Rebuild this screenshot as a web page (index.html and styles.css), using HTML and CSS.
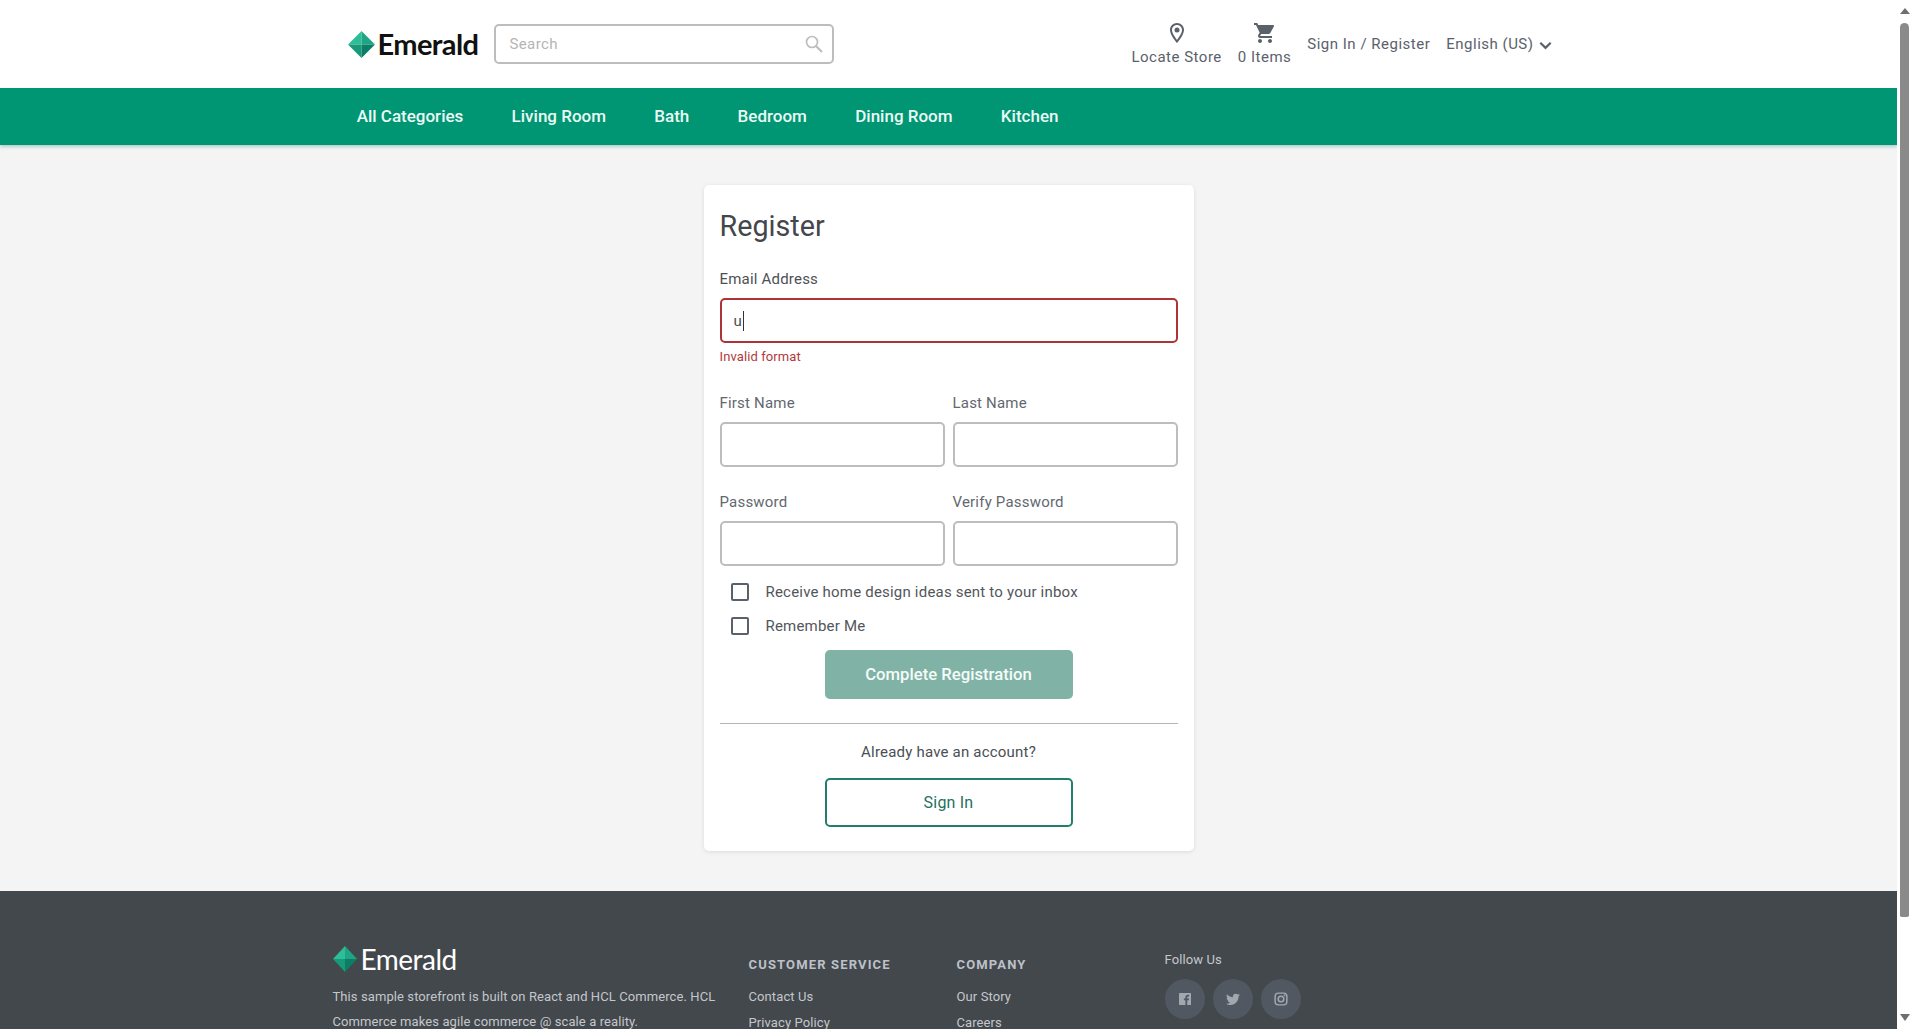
FILE: index.html
```html
<!DOCTYPE html>
<html lang="en">
<head>
<meta charset="utf-8">
<title>Register | Emerald</title>
<link rel="stylesheet" href="styles.css">
</head>
<body>
<div class="window">
  <div class="page">
    <header class="top">
      <div class="wrap top-inner">
        <a class="logo" href="#">
          <svg class="gem" viewBox="0 0 26 24" preserveAspectRatio="none"><polygon points="13,0 0,12 13,12" fill="#2dbd97"/><polygon points="13,0 26,12 13,12" fill="#1fa585"/><polygon points="0,12 13,24 13,12" fill="#17997a"/><polygon points="26,12 13,24 13,12" fill="#0b7f66"/></svg>
          <span class="logo-text">Emerald</span>
        </a>
        <div class="search">
          <input class="search-input" type="text" placeholder="Search">
          <svg class="search-icon" viewBox="0 0 18 18"><circle cx="7" cy="7" r="5.5" fill="none" stroke="#bdbdbd" stroke-width="1.7"/><path d="M11 11l6 6" stroke="#bdbdbd" stroke-width="2.2"/></svg>
        </div>
        <div class="top-actions">
          <a class="stack" href="#">
            <svg class="top-icon" viewBox="0 0 24 24"><path d="M12 2C8.13 2 5 5.13 5 9c0 5.25 7 13 7 13s7-7.75 7-13c0-3.87-3.13-7-7-7zM7 9c0-2.76 2.24-5 5-5s5 2.24 5 5c0 2.88-2.88 7.19-5 9.88C9.92 16.21 7 11.85 7 9z"/><circle cx="12" cy="9" r="2.5"/></svg>
            <span>Locate Store</span>
          </a>
          <a class="stack" href="#">
            <svg class="top-icon" viewBox="0 0 24 24"><path d="M7 18c-1.1 0-1.99.9-1.99 2S5.9 22 7 22s2-.9 2-2-.9-2-2-2zM1 2v2h2l3.6 7.59-1.35 2.45c-.16.28-.25.61-.25.96 0 1.1.9 2 2 2h12v-2H7.42c-.14 0-.25-.11-.25-.25l.03-.12.9-1.63h7.45c.75 0 1.41-.41 1.75-1.03l3.58-6.47c.08-.14.12-.31.12-.48 0-.55-.45-1-1-1H5.21l-.94-2H1zm16 16c-1.1 0-1.99.9-1.99 2s.89 2 1.99 2 2-.9 2-2-.9-2-2-2z"/></svg>
            <span>0 Items</span>
          </a>
          <a class="top-link" href="#">Sign In / Register</a>
          <a class="top-link lang" href="#">English (US)
            <svg class="chev" viewBox="0 0 12 8"><path d="M1.2 1.4L6 6.2l4.8-4.8" fill="none" stroke="#5b616b" stroke-width="2"/></svg>
          </a>
        </div>
      </div>
    </header>
    <nav class="menu">
      <div class="wrap menu-inner">
        <a href="#">All Categories</a>
        <a href="#">Living Room</a>
        <a href="#">Bath</a>
        <a href="#">Bedroom</a>
        <a href="#">Dining Room</a>
        <a href="#">Kitchen</a>
      </div>
    </nav>
    <main class="main">
      <form class="card">
        <h1 class="title">Register</h1>
        <div class="field">
          <label class="label dark">Email Address</label>
          <div class="input input-error"><span>u</span><i class="caret"></i></div>
          <div class="error">Invalid format</div>
        </div>
        <div class="cols first-cols">
          <div class="field"><label class="label">First Name</label><input class="input" type="text"></div>
          <div class="field"><label class="label">Last Name</label><input class="input" type="text"></div>
        </div>
        <div class="cols pw-cols">
          <div class="field"><label class="label">Password</label><input class="input" type="password"></div>
          <div class="field"><label class="label">Verify Password</label><input class="input" type="password"></div>
        </div>
        <div class="checks">
          <div class="check"><span class="box"></span>Receive home design ideas sent to your inbox</div>
          <div class="check"><span class="box"></span>Remember Me</div>
        </div>
        <button class="btn btn-primary" type="button">Complete Registration</button>
        <hr class="rule">
        <p class="already">Already have an account?</p>
        <button class="btn btn-outline" type="button">Sign In</button>
      </form>
    </main>
    <footer class="foot">
      <div class="wrap foot-grid">
        <div class="foot-about">
          <a class="logo foot-logo" href="#">
            <svg class="gem gem-small" viewBox="0 0 26 24" preserveAspectRatio="none"><polygon points="13,0 0,12 13,12" fill="#2dbd97"/><polygon points="13,0 26,12 13,12" fill="#1fa585"/><polygon points="0,12 13,24 13,12" fill="#17997a"/><polygon points="26,12 13,24 13,12" fill="#0b7f66"/></svg>
            <span class="logo-text">Emerald</span>
          </a>
          <p class="about">This sample storefront is built on React and HCL Commerce. HCL Commerce makes agile commerce @ scale a reality.</p>
        </div>
        <div class="foot-col">
          <h2 class="foot-head">CUSTOMER SERVICE</h2>
          <a href="#">Contact Us</a>
          <a href="#">Privacy Policy</a>
        </div>
        <div class="foot-col">
          <h2 class="foot-head">COMPANY</h2>
          <a href="#">Our Story</a>
          <a href="#">Careers</a>
        </div>
        <div class="foot-social">
          <div class="follow">Follow Us</div>
          <div class="socials">
            <a class="social" href="#"><svg viewBox="0 0 24 24"><path d="M20 3H4a1 1 0 0 0-1 1v16a1 1 0 0 0 1 1h8.6v-7h-2.3v-2.7h2.3v-2c0-2.3 1.4-3.6 3.5-3.6.7 0 1.4 0 2.1.1v2.4h-1.4c-1.1 0-1.4.5-1.4 1.3v1.8h2.7l-.4 2.7h-2.3v7H20a1 1 0 0 0 1-1V4a1 1 0 0 0-1-1z"/></svg></a>
            <a class="social" href="#"><svg viewBox="0 0 24 24"><path d="M22.46 6c-.77.35-1.6.58-2.46.69.88-.53 1.56-1.37 1.88-2.38-.83.5-1.75.85-2.72 1.05C18.37 4.5 17.26 4 16 4c-2.35 0-4.27 1.92-4.27 4.29 0 .34.04.67.11.98C8.28 9.09 5.11 7.38 3 4.79c-.37.63-.58 1.37-.58 2.15 0 1.49.75 2.81 1.91 3.56-.71 0-1.37-.2-1.95-.5v.03c0 2.08 1.48 3.82 3.44 4.21a4.22 4.22 0 0 1-1.93.07 4.28 4.28 0 0 0 4 2.98 8.521 8.521 0 0 1-5.33 1.84c-.34 0-.68-.02-1.02-.06C3.44 20.29 5.7 21 8.12 21 16 21 20.33 14.46 20.33 8.79c0-.19 0-.37-.01-.56.84-.6 1.56-1.36 2.14-2.23z"/></svg></a>
            <a class="social" href="#"><svg viewBox="0 0 24 24"><rect x="3.2" y="3.2" width="17.6" height="17.6" rx="5" fill="none" stroke="#a3a8ae" stroke-width="2.2"/><circle cx="12" cy="12" r="4.2" fill="none" stroke="#a3a8ae" stroke-width="2.2"/><circle cx="17.3" cy="6.7" r="1.3"/></svg></a>
          </div>
        </div>
      </div>
    </footer>
  </div>
  <div class="scrollbar" aria-hidden="true">
    <span class="arrow arrow-up"></span>
    <span class="thumb"></span>
    <span class="arrow arrow-down"></span>
  </div>
</div>
</body>
</html>
```
FILE: styles.css
```css
* { box-sizing: border-box; }
html, body { margin: 0; height: 100%; overflow: hidden; }
body { font-family: Roboto, "Liberation Sans", sans-serif; color: #43484d; background: #f4f4f4; }
a { color: inherit; text-decoration: none; }

.window { display: flex; height: 1029px; }
.page { flex: 1; min-width: 0; height: 1029px; overflow: hidden; display: flex; flex-direction: column; }
.wrap { width: 1232px; margin: 0 auto; }

/* scrollbar */
.scrollbar { width: 15px; flex: none; background: #fff; display: flex; flex-direction: column; align-items: center; padding: 8px 0; }
.thumb { width: 9px; height: 895px; margin: 9px 0 97px; background: #8a8a8a; border-radius: 5px 5px 2px 2px; }
.arrow { width: 0; height: 0; border-left: 5px solid transparent; border-right: 5px solid transparent; }
.arrow-up { border-bottom: 6px solid #6f6f6f; }
.arrow-down { border-top: 7px solid #6f6f6f; }

/* header */
.top { background: #fff; height: 88px; flex: none; }
.top-inner { display: flex; align-items: center; height: 88px; padding-left: 15px; }
.logo { display: flex; align-items: center; gap: 3px; }
.gem { width: 27px; height: 27px; }
.logo-text { font-family: Lato, sans-serif; font-weight: 700; font-size: 29px; color: #111; letter-spacing: -0.6px; line-height: 32px; }
.search { position: relative; width: 340px; height: 40px; margin-left: 16px; }
.search-input { width: 100%; height: 100%; border: 2px solid #bdbdbd; border-radius: 5px; padding: 0 40px 0 13px; font: 15px Roboto, sans-serif; letter-spacing: .4px; outline: none; background: #fff; }
.search-input::placeholder { color: #b5b5b5; opacity: 1; }
.search-icon { position: absolute; right: 11px; top: 11px; width: 18px; height: 18px; }
.top-actions { margin-left: auto; display: flex; align-items: center; gap: 16px; color: #5b616b; font-size: 15px; letter-spacing: .5px; padding-right: 13px; }
.stack { display: flex; flex-direction: column; align-items: center; gap: 3px; line-height: 18px; padding-bottom: 2px; }
.top-icon { width: 24px; height: 24px; fill: #5b616b; }
.top-link { white-space: nowrap; display: flex; align-items: center; gap: 5px; }
.chev { width: 13px; height: 9px; margin-top: 3px; }

/* nav */
.menu { background: #009573; height: 57px; flex: none; box-shadow: 0 2px 3px rgba(0,120,100,.28); position: relative; }
.menu-inner { display: flex; align-items: center; height: 57px; }
.menu-inner a { color: #eafaf5; font-size: 17px; font-weight: 500; padding: 0 24.15px 2px; white-space: nowrap; }

/* card */
.main { padding: 40px 0; flex: none; display: flex; justify-content: center; }
.card { width: 490px; height: 666px; background: #fff; border-radius: 5px; box-shadow: 0 1px 4px rgba(0,0,0,.1); padding: 16px; display: flex; flex-direction: column; }
.title { margin: 8px 0 0; font-size: 28.7px; font-weight: 400; line-height: 34px; color: #43474b; }
.field { display: flex; flex-direction: column; min-width: 0; }
.card > .field { margin-top: 26px; }
.label { font-size: 15px; letter-spacing: .2px; line-height: 20px; color: #63686f; margin-bottom: 9px; }
.label.dark { color: #4d5156; margin-bottom: 9px; }
.input { width: 100%; height: 45px; border: 2px solid #bdbdbd; border-radius: 5px; background: #fff; padding: 0 12px; font: 15px Roboto, sans-serif; outline: none; display: block; }
.input-error { border-color: #ad3336; display: flex; align-items: center; color: #4a4d50; }
.caret { width: 1px; height: 20px; background: #333; margin-left: 1px; }
.error { font-size: 13px; line-height: 16px; color: #b03a3c; margin-top: 6px; letter-spacing: .1px; }
.cols { display: grid; grid-template-columns: 1fr 1fr; gap: 8px; }
.first-cols { margin-top: 28px; }
.pw-cols { margin-top: 25px; }
.checks { margin-top: 9px; display: flex; flex-direction: column; }
.check { display: flex; align-items: center; height: 34px; padding-left: 11px; font-size: 15px; letter-spacing: .2px; color: #52565b; }
.box { width: 18px; height: 18px; border: 2px solid #5b616b; border-radius: 2px; margin-right: 17px; flex: none; }
.btn { width: 248px; height: 49px; align-self: center; border-radius: 5px; font: 500 16.7px Roboto, sans-serif; cursor: pointer; }
.btn-primary { margin-top: 7px; padding-bottom: 2px; background: #80b3a6; border: 0; color: #f4fbf8; }
.rule { width: 100%; margin: 24px 0 0; border: 0; border-top: 1px solid #b5b5b5; }
.already { margin: 19px 0 0; text-align: center; font-size: 15px; letter-spacing: .2px; line-height: 18px; color: #4a4f54; }
.btn-outline { margin-top: 17px; background: #fff; border: 2px solid #21806c; color: #1f7060; font-weight: 400; font-size: 16px; letter-spacing: .2px; }

/* footer */
.foot { background: #43484d; flex: 1 0 auto; padding-top: 50px; min-height: 240px; }
.foot-grid { display: grid; grid-template-columns: 416px 208px 207px 1fr; }
.foot-logo { gap: 4px; padding-top: 2px; }
.gem-small { width: 24px; height: 26px; }
.foot-logo .logo-text { color: #fff; font-size: 28px; letter-spacing: -0.5px; font-weight: 400; }
.about { margin: 10px 0 0; width: 400px; font-size: 13px; letter-spacing: .09px; line-height: 24.5px; color: #c3c7cb; }
.foot-col { display: flex; flex-direction: column; align-items: flex-start; padding-top: 16px; }
.foot-col a { font-size: 13px; letter-spacing: .1px; line-height: 26px; color: #c3c7cb; }
.foot-head { margin: 0 0 11px; font-size: 13px; font-weight: 700; letter-spacing: 1.15px; line-height: 16px; color: #bcc1c7; }
.foot-social { padding-left: 1px; padding-top: 10px; }
.follow { font-size: 13px; letter-spacing: .1px; line-height: 18px; color: #c3c7cb; }
.socials { margin-top: 10px; display: flex; gap: 8px; }
.social { width: 40px; height: 40px; border-radius: 50%; background: #515862; display: flex; align-items: center; justify-content: center; }
.social svg { width: 16px; height: 16px; fill: #a3a8ae; }
```
